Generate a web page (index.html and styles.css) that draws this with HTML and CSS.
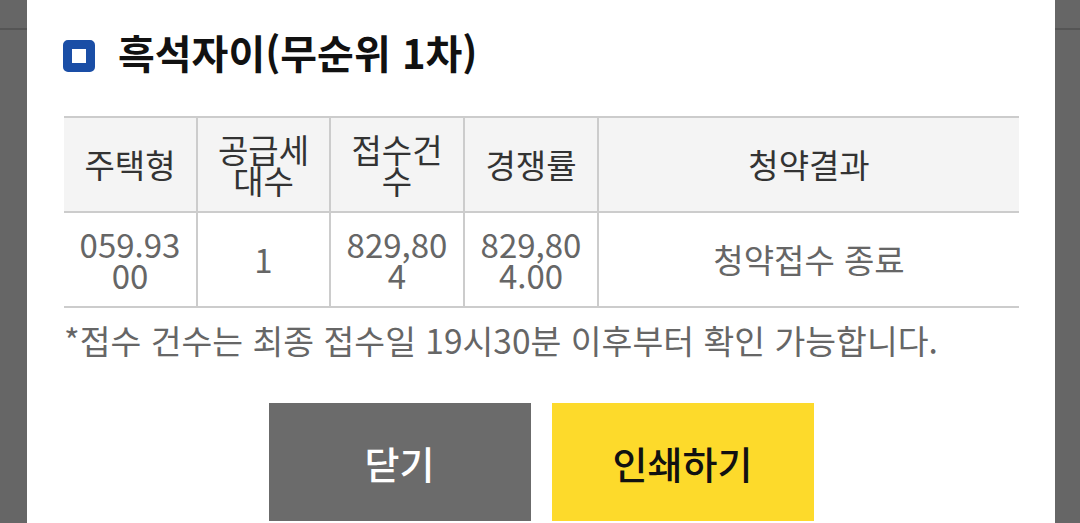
FILE: index.html
```html
<!DOCTYPE html>
<html lang="ko">
<head>
<meta charset="utf-8">
<title>흑석자이(무순위 1차)</title>
<link rel="stylesheet" href="styles.css">
</head>
<body>
<div class="modal">
  <div class="title-row">
    <span class="title-icon"></span>
    <h1 class="title">흑석자이(무순위 1차)</h1>
  </div>
  <div class="result-table">
    <div class="cell head">주택형</div>
    <div class="cell head">공급세대수</div>
    <div class="cell head">접수건수</div>
    <div class="cell head">경쟁률</div>
    <div class="cell head last">청약결과</div>
    <div class="cell data">059.9300</div>
    <div class="cell data">1</div>
    <div class="cell data">829,804</div>
    <div class="cell data">829,804.00</div>
    <div class="cell data last">청약접수 종료</div>
  </div>
  <p class="note">*접수 건수는 최종 접수일 19시30분 이후부터 확인 가능합니다.</p>
  <div class="buttons">
    <button class="btn btn-close">닫기</button>
    <button class="btn btn-print">인쇄하기</button>
  </div>
</div>
</body>
</html>
```

FILE: styles.css
```css
html, body {
  margin: 0;
  padding: 0;
  height: 523px;
  overflow: hidden;
}
body {
  background: linear-gradient(to bottom, #666666 0, #666666 28px, #555555 28px, #555555 30px, #666666 30px);
  font-family: "Noto Sans CJK KR", "Noto Sans", sans-serif;
}
.modal {
  margin-left: 27px;
  width: 1028px;
  height: 523px;
  background: #ffffff;
  box-sizing: border-box;
  padding: 28px 36px 0 36px;
}
.title-row {
  display: flex;
  align-items: center;
  gap: 23px;
  height: 48px;
}
.title-icon {
  width: 32px;
  height: 32px;
  box-sizing: border-box;
  border: 9px solid #1a4ea6;
  border-radius: 5px;
  background: #ffffff;
  margin-top: 8px;
  flex: none;
}
.title {
  margin: 0;
  font-size: 40px;
  line-height: 48px;
  font-weight: 700;
  color: #111111;
}
.result-table {
  margin-top: 40px;
  margin-left: 1px;
  display: grid;
  grid-template-columns: 134px 133px 134px 134px 420px;
  border-top: 2px solid #cccccc;
}
.cell {
  box-sizing: border-box;
  height: 95px;
  border-bottom: 2px solid #cccccc;
  border-right: 2px solid #cccccc;
  display: flex;
  align-items: center;
  justify-content: center;
  text-align: center;
  padding: 0 12px;
  font-size: 33px;
  line-height: 31px;
  word-break: break-all;
}
.cell.last {
  border-right: none;
}
.head {
  background: #f4f4f4;
  color: #333333;
}
.data {
  background: #ffffff;
  color: #666666;
}
.note {
  margin: 12px 0 0 1px;
  font-size: 33.5px;
  line-height: 40px;
  color: #666666;
  white-space: nowrap;
}
.buttons {
  margin-top: 43px;
  display: flex;
  justify-content: center;
  gap: 21px;
}
.btn {
  width: 262px;
  height: 118px;
  border: none;
  padding: 0;
  font-family: "Noto Sans CJK KR", "Noto Sans", sans-serif;
  font-size: 38px;
  font-weight: 500;
  display: flex;
  align-items: center;
  justify-content: center;
}
.btn-close {
  background: #6b6b6b;
  color: #ffffff;
}
.btn-print {
  background: #fdda2b;
  color: #111111;
}
```
